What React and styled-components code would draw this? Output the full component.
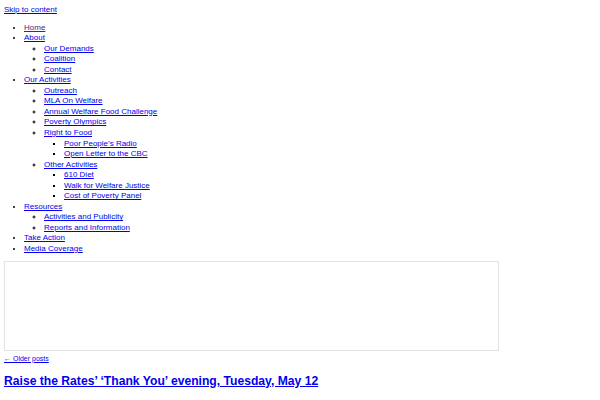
import styled, { createGlobalStyle } from "styled-components";

const GlobalStyle = createGlobalStyle`
  html, body {
    margin: 0;
    background: #fff;
  }
  body {
    margin: 4px;
    font-family: "Liberation Sans", Arial, sans-serif;
    font-size: 8px;
    line-height: 10.55px;
    color: #000;
  }
`;

const menu = [
  { label: "Home", visited: true },
  {
    label: "About",
    children: [{ label: "Our Demands" }, { label: "Coalition" }, { label: "Contact" }],
  },
  {
    label: "Our Activities",
    children: [
      { label: "Outreach" },
      { label: "MLA On Welfare" },
      { label: "Annual Welfare Food Challenge" },
      { label: "Poverty Olympics" },
      {
        label: "Right to Food",
        children: [{ label: "Poor People\u2019s Radio" }, { label: "Open Letter to the CBC" }],
      },
      {
        label: "Other Activities",
        children: [
          { label: "610 Diet" },
          { label: "Walk for Welfare Justice" },
          { label: "Cost of Poverty Panel" },
        ],
      },
    ],
  },
  {
    label: "Resources",
    children: [{ label: "Activities and Publicity" }, { label: "Reports and Information" }],
  },
  { label: "Take Action" },
  { label: "Media Coverage" },
];

const bullets = ["disc", "circle", "square"];

const Link = styled.a`
  color: ${(p) => (p.$visited ? "#551a8b" : "#0000ee")};
  text-decoration: underline;
  cursor: pointer;
`;

const SkipLink = styled.div`
  padding-top: 1px;
`;

const Menu = styled.ul`
  margin: ${(p) => (p.$level === 0 ? "7px 0 6px" : "0")};
  padding-left: 20px;
  list-style-type: ${(p) => bullets[p.$level] || "square"};
`;

const MenuItem = styled.li`
  display: list-item;
`;

const Frame = styled.div`
  width: 495px;
  height: 90px;
  box-sizing: border-box;
  border: 1px solid #e2e2e2;
`;

const PostsNav = styled.div`
  margin-top: 3px;
  font-size: 7px;
  line-height: 9px;
`;

const PostTitle = styled.h2`
  margin: 11px 0 10px;
  font-size: 12.15px;
  line-height: 14px;
  font-weight: bold;
`;

const MenuList = ({ items, level }) => (
  <Menu $level={level}>
    {items.map((item) => (
      <MenuItem key={item.label}>
        <Link $visited={item.visited}>{item.label}</Link>
        {item.children && <MenuList items={item.children} level={level + 1} />}
      </MenuItem>
    ))}
  </Menu>
);

const App = () => (
  <>
    <GlobalStyle />
    <SkipLink>
      <Link>Skip to content</Link>
    </SkipLink>
    <MenuList items={menu} level={0} />
    <Frame />
    <PostsNav>
      <Link>{"\u2190"} Older posts</Link>
    </PostsNav>
    <PostTitle>
      <Link>Raise the Rates’ ‘Thank You’ evening, Tuesday, May 12</Link>
    </PostTitle>
  </>
);

export default App;
